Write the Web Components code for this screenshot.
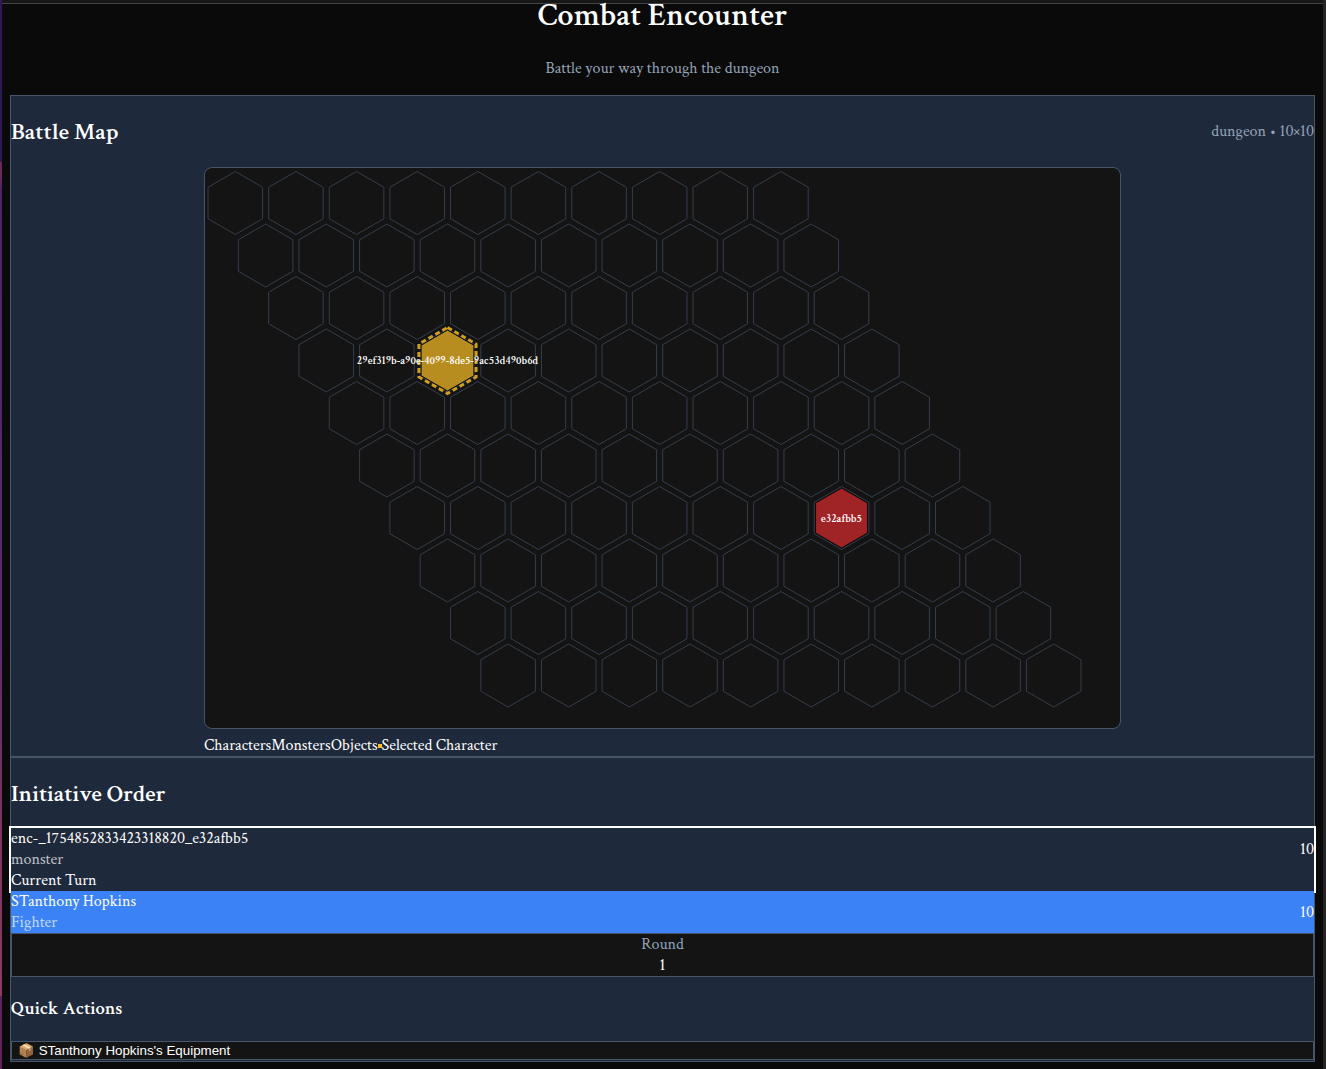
<!DOCTYPE html>
<html lang="en">
<head>
<meta charset="utf-8">
<title>Combat Encounter</title>
<style>
  :root {
    --bg: #0a0a0a;
    --panel: #1e293b;
    --line: #475569;
    --inset: #141414;
    --muted: #94a3b8;
    --accent: #3b82f6;
    --gold: #fbbf24;
  }
  html { background: var(--bg); }
  body {
    margin: 0;
    background: var(--bg);
    color: #fff;
    font: 16px/21px "Crimson Text", "Liberation Serif", serif;
  }
</style>
</head>
<body>
<app-frame>
  <page-title heading="Combat Encounter">Battle your way through the dungeon</page-title>
  <app-panel>
    <panel-heading>Battle Map<span slot="aside">dungeon • 10×10</span></panel-heading>
    <hex-map size="10"></hex-map>
  </app-panel>
  <app-panel>
    <panel-heading>Initiative Order</panel-heading>
    <turn-row name="enc-_1754852833423318820_e32afbb5" role-name="monster" score="10" current></turn-row>
    <turn-row name="STanthony Hopkins" role-name="Fighter" score="10" player></turn-row>
    <round-counter value="1"></round-counter>
    <sub-heading>Quick Actions</sub-heading>
    <action-button>📦 STanthony Hopkins's Equipment</action-button>
  </app-panel>
</app-frame>

<script>
  const define = (name, render) => customElements.define(name, class extends HTMLElement {
    connectedCallback() {
      if (this.shadowRoot) return;
      this.attachShadow({ mode: 'open' }).innerHTML = render(this);
    }
  });

  define('app-frame', () => `
    <style>
      :host { display: grid; grid-template-columns: 2px minmax(0, 1fr) 3px; min-height: 100vh; }
      .left { background: linear-gradient(#2e1a52 0 162px, #6b2a5c 162px 172px, #4d2366 190px, #5a2a70 60%, #7c355f 78%, #8a3b62 996px, #5d2257 996px); }
      .right { background: #242424; }
      .bar { height: 3px; background: #171717; border-bottom: 1px solid #444; }
      main { padding: 0 8px 7px; }
    </style>
    <div class="left"></div>
    <div><div class="bar"></div><main><slot></slot></main></div>
    <div class="right"></div>`);

  define('page-title', el => `
    <style>
      :host { display: block; text-align: center; }
      h1 { margin: 0; font-size: 32px; line-height: 24px; font-weight: 600; }
      p { margin: 0; padding: 30px 0 16px; color: var(--muted); }
    </style>
    <h1>${el.getAttribute('heading')}</h1>
    <p><slot></slot></p>`);

  define('app-panel', () => `
    <style>
      :host { display: block; background: var(--panel); border: 1px solid var(--line); }
    </style>
    <slot></slot>`);

  define('panel-heading', () => `
    <style>
      :host { display: flex; justify-content: space-between; align-items: center; padding: 20px 0 19px; }
      h2 { margin: 0; font-size: 24px; line-height: 31px; font-weight: 600; }
      ::slotted([slot=aside]) { color: var(--muted); }
    </style>
    <h2><slot></slot></h2><slot name="aside"></slot>`);

  define('sub-heading', () => `
    <style>
      :host { display: block; padding: 21px 0 22px; }
      h3 { margin: 0; font-weight: 600; }
    </style>
    <h3><slot></slot></h3>`);

  define('hex-map', el => {
    const size = +el.getAttribute('size');
    const step = 35 * Math.sqrt(3);
    const center = (q, r) => [step / 2 + step * (q + r / 2), 35 + 52.5 * r];
    const hex = (q, r, radius) => {
      const [cx, cy] = center(q, r);
      return Array.from({ length: 6 }, (_, i) => {
        const a = Math.PI / 180 * (60 * i - 90);
        return (cx + radius * Math.cos(a)).toFixed(2) + ',' + (cy + radius * Math.sin(a)).toFixed(2);
      }).join(' ');
    };
    let cells = '';
    for (let r = 0; r < size; r++)
      for (let q = 0; q < size; q++)
        cells += `<polygon class="cell" points="${hex(q, r, 31.5)}"/>`;
    const label = (q, r, text) => {
      const [x, y] = center(q, r);
      return `<text x="${x.toFixed(1)}" y="${Math.floor(y) + 4}">${text}</text>`;
    };
    return `
    <style>
      :host { display: block; max-width: 917px; margin: 0 auto; padding-top: 1px; }
      svg { display: block; box-sizing: border-box; width: 100%; height: auto; background: var(--inset); border: 1px solid var(--line); border-radius: 8px; }
      .cell { fill: none; stroke: #343e4c; stroke-width: 1; }
      .token { stroke: #0b0b0b; stroke-width: 1; }
      .ring { fill: none; stroke: #cf9f22; stroke-width: 3; stroke-dasharray: 5 3; }
      text { fill: #fff; font-size: 11px; font-weight: 600; text-anchor: middle; }
      .legend { display: flex; align-items: center; padding: 6px 0 0; }
      i { flex: none; width: 4px; height: 4px; background: var(--gold); }
    </style>
    <svg viewBox="0 0 915 560" role="img" aria-label="Battle map">
      ${cells}
      <polygon class="token" fill="#b78d1f" points="${hex(2, 3, 30.5)}"/>
      <polygon class="ring" points="${hex(2, 3, 33)}"/>
      <polygon class="token" fill="#a02325" points="${hex(7, 6, 30)}"/>
      ${label(2, 3, '29ef319b-a90e-4099-8de5-9ac53d490b6d')}
      ${label(7, 6, 'e32afbb5')}
    </svg>
    <div class="legend"><span>Characters</span><span>Monsters</span><span>Objects</span><i></i><span>Selected Character</span></div>`;
  });

  define('turn-row', el => `
    <style>
      :host { display: block; }
      :host([current]) { position: relative; box-shadow: 0 0 0 2px #fff; }
      :host([player]) { position: relative; background: var(--accent); }
      .row { display: flex; justify-content: space-between; align-items: center; }
      .role { opacity: .7; }
    </style>
    <div class="row">
      <div>
        <div>${el.getAttribute('name')}</div>
        <div class="role">${el.getAttribute('role-name')}</div>
      </div>
      <div>${el.getAttribute('score')}</div>
    </div>
    ${el.hasAttribute('current') ? '<div>Current Turn</div>' : ''}`);

  define('round-counter', el => `
    <style>
      :host { display: block; text-align: center; background: var(--inset); border: 1px solid var(--line); }
      .label { color: var(--muted); }
    </style>
    <div class="label">Round</div>
    <div>${el.getAttribute('value')}</div>`);

  define('action-button', () => `
    <style>
      :host { display: block; padding-bottom: 1px; }
      button {
        display: block; width: 100%; margin: 0; padding: 1px 6px; text-align: left;
        font-family: "Liberation Sans", Arial, sans-serif; line-height: 15px; color: #fff;
        background: var(--inset); border: 1px solid var(--line);
      }
    </style>
    <button type="button"><slot></slot></button>`);
</script>
</body>
</html>
